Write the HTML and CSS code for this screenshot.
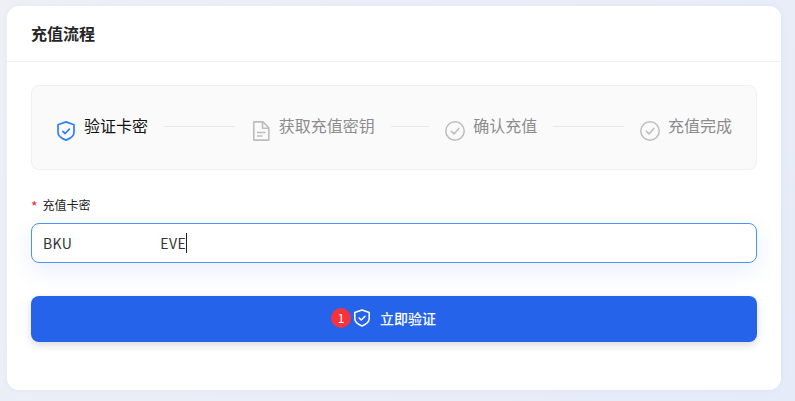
FILE: index.html
```html
<!DOCTYPE html>
<html lang="zh-CN">
<head>
    <meta charset="UTF-8">
    <meta name="viewport" content="width=device-width, initial-scale=1.0">
    <title>充值流程</title>
    <link rel="stylesheet" href="styles.css">
</head>
<body>
    <div class="card">
        <div class="card_head">充值流程</div>
        <div class="card_body">
            <div class="steps">
                <div class="step active">
                    <svg class="step_icon" width="20" height="20" viewBox="0 0 20 20" fill="none" stroke="#2b7fff" stroke-width="1.700" stroke-linejoin="round" stroke-linecap="round">
                        <path d="M10 .9 18 3.700V11.500c0 3.300-3.300 5.800-8 7.600C5.300 17.300 2 14.800 2 11.500V3.700Z"/>
                        <path d="M6.800 10.300 9.200 12.500 13.300 8.200"/>
                    </svg>
                    <span class="step_text">验证卡密</span>
                    <i class="step_line"></i>
                </div>
                <div class="step">
                    <svg class="step_icon" width="20" height="20" viewBox="0 0 20 20" fill="none" stroke="#bdbdbd" stroke-width="1.600" stroke-linejoin="round">
                        <path d="M2.800 .9H12L17.800 6.700V19.100H2.800Z"/>
                        <path d="M11.500 .9V7.200H17.800"/>
                        <path d="M6 11.500H14.500M6 15H11.500"/>
                    </svg>
                    <span class="step_text">获取充值密钥</span>
                    <i class="step_line"></i>
                </div>
                <div class="step">
                    <svg class="step_icon" width="20" height="20" viewBox="0 0 20 20" fill="none" stroke="#bdbdbd" stroke-width="1.500" stroke-linecap="round" stroke-linejoin="round">
                        <circle cx="10" cy="10" r="9.200"/>
                        <path d="M6.300 10.200 9 12.900 13.800 7.400"/>
                    </svg>
                    <span class="step_text">确认充值</span>
                    <i class="step_line"></i>
                </div>
                <div class="step last">
                    <svg class="step_icon" width="20" height="20" viewBox="0 0 20 20" fill="none" stroke="#bdbdbd" stroke-width="1.500" stroke-linecap="round" stroke-linejoin="round">
                        <circle cx="10" cy="10" r="9.200"/>
                        <path d="M6.300 10.200 9 12.900 13.800 7.400"/>
                    </svg>
                    <span class="step_text">充值完成</span>
                </div>
            </div>

            <div class="field_label"><span class="star">*</span>充值卡密</div>
            <div class="field_input">
                <span>BKU</span>
                <span class="hidden_part"></span>
                <span>EVE</span>
                <i class="caret"></i>
            </div>

            <div class="submit">
                <span class="badge">1</span>
                <svg class="submit_icon" width="18" height="18" viewBox="0 0 20 20" fill="none" stroke="#fff" stroke-width="1.700" stroke-linejoin="round" stroke-linecap="round">
                    <path d="M10 1.200 18 3.800V10.500c0 3.800-3.300 6.500-8 8.300C5.300 17 2 14.300 2 10.500V3.800Z"/>
                    <path d="M6.800 10 9.200 12.200 13.300 8"/>
                </svg>
                <span>立即验证</span>
            </div>
        </div>
    </div>
</body>
</html>
```

FILE: styles.css
```css
*{
    padding: 0;
    margin: 0;
    box-sizing: border-box;
}

html, body{
    height: 100%;
}

body{
    padding: 6px 14px 0 7px;
    overflow: hidden;
    background: linear-gradient(135deg, #eef0f6 0%, #e5ebf8 100%);
    font-family: "Noto Sans CJK SC", "Liberation Sans", sans-serif;
    color: #1f1f1f;
}

.card{
    height: 384px;
    background-color: #fff;
    border-radius: 12px;
    box-shadow: 0 0 6px rgba(37, 99, 235, 0.05);
}

.card_head{
    height: 56px;
    padding-left: 24px;
    border-bottom: 1px solid #eeeff1;
    font-size: 16px;
    font-weight: 700;
    line-height: 55px;
    color: #262626;
}

.card_body{
    padding: 23px 24px 0;
}

.steps{
    display: flex;
    height: 85px;
    padding: 0 24px;
    align-items: flex-start;
    gap: 16px;
    background-color: #fafafa;
    border: 1px solid #f0f0f0;
    border-radius: 8px;
}

.step{
    display: flex;
    flex: 1;
    align-items: flex-start;
    height: 100%;
    padding-top: 35px;
    color: #8c8c8c;
}

.step.last{
    flex: none;
}

.step.active{
    color: #111;
}

.step_icon{
    flex: none;
}

.step_text{
    margin: -3px 0 0 8px;
    font-size: 16px;
    line-height: 14px;
    white-space: nowrap;
}

.step_line{
    flex: 1;
    height: 1px;
    margin: 5px 0 0 16px;
    background-color: #e8e8e8;
}

.field_label{
    height: 18px;
    margin-top: 26px;
    font-size: 12px;
    line-height: 18px;
    color: #222;
}

.star{
    margin-right: 5px;
    font-size: 14px;
    line-height: 1;
    vertical-align: -2px;
    color: #f5222d;
}

.field_input{
    display: flex;
    align-items: center;
    height: 40px;
    margin-top: 9px;
    padding-left: 11px;
    background-color: #fff;
    border: 1px solid #4a94f8;
    border-radius: 8px;
    box-shadow: 0 8px 24px rgba(37, 99, 235, 0.10);
    font-size: 14px;
    letter-spacing: 0.4px;
    color: #333;
}

.hidden_part{
    width: 88px;
}

.caret{
    width: 1px;
    height: 20px;
    background-color: #222;
}

.submit{
    display: flex;
    align-items: center;
    justify-content: center;
    height: 46px;
    margin-top: 33px;
    padding: 0 21px 2px 0;
    background-color: #2563eb;
    border-radius: 8px;
    box-shadow: 0 3px 8px rgba(0, 0, 0, 0.15);
    font-size: 14px;
    font-weight: 500;
    color: #fff;
}

.badge{
    width: 20px;
    height: 20px;
    margin-right: 2px;
    background-color: #f5333f;
    border-radius: 50%;
    font-size: 12px;
    font-weight: 400;
    line-height: 19px;
    text-align: center;
}

.submit_icon{
    margin-right: 9px;
}
```
